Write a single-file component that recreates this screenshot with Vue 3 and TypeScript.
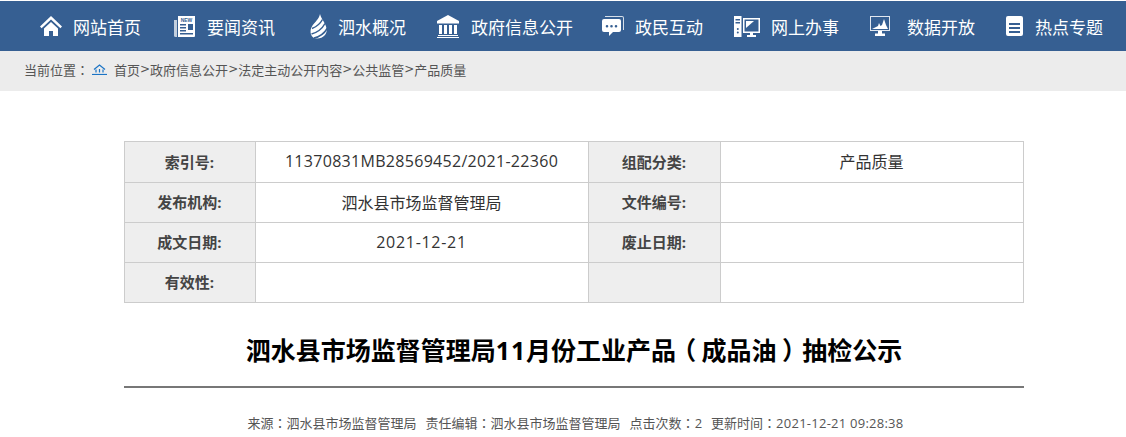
<script setup lang="ts">
interface NavItem { label: string; icon: string; width: number; column: number }
const nav: NavItem[] = [
  { label: '网站首页', icon: 'home', width: 33, column: 134 },
  { label: '要闻资讯', icon: 'news', width: 33, column: 134 },
  { label: '泗水概况', icon: 'drop', width: 30, column: 129 },
  { label: '政府信息公开', icon: 'bank', width: 34, column: 165 },
  { label: '政民互动', icon: 'chat', width: 33, column: 132 },
  { label: '网上办事', icon: 'pc', width: 37, column: 136 },
  { label: '数据开放', icon: 'chart', width: 37, column: 136 },
  { label: '热点专题', icon: 'list', width: 29, column: 120 },
]
const crumbs = ['首页', '政府信息公开', '法定主动公开内容', '公共监管', '产品质量']
const rows = [
  { k: 'a', c: ['索引号:', '11370831MB28569452/2021-22360', '组配分类:', '产品质量'], cls: 'code' },
  { k: 'b', c: ['发布机构:', '泗水县市场监督管理局', '文件编号:', ''], cls: '' },
  { k: 'c', c: ['成文日期:', '2021-12-21', '废止日期:', ''], cls: 'date' },
  { k: 'd', c: ['有效性:', '', '', ''], cls: '' },
]
</script>

<template>
  <div class="page">
    <nav class="nav">
      <a v-for="n in nav" :key="n.label" class="nav-item" :style="{ width: n.column + 'px' }">
        <span class="nav-icon" :style="{ width: n.width + 'px' }">
          <svg v-if="n.icon === 'home'" width="22" height="22" viewBox="0 0 22 22" fill="#fff"><path d="M11 1 0 11.500l1.600 1.700L11 4.400l9.400 8.800 1.600-1.700z"/><path d="M4 13.500 11 7l7 6.500V21h-5v-5H9v5H4z"/></svg>
          <svg v-else-if="n.icon === 'news'" width="21" height="21" viewBox="0 0 21 21" fill="#fff"><path d="M0 4h3v17H1.500A1.500 1.500 0 0 1 0 19.500z" opacity=".7"/><path fill-rule="evenodd" d="M4 0h17v20a1 1 0 0 1-1 1H4zM6 8v1.500h6V8zm8 0v6h5V8zM6 11v1.500h6V11zm0 3v1.500h6V14zm0 3v1.500h13V17z"/><text x="12.500" y="6" class="new">NEW</text></svg>
          <svg v-else-if="n.icon === 'drop'" class="drop" width="18" height="25" viewBox="0 0 18 25"><path fill="#fff" d="M10 0c1 4 3 6 5 10 2 4 2.500 8 0 11-2 2.500-5 3.500-8 3.500-3 0-5-1.500-6-4-1-3-.5-6 1.500-9C5 8 9 5 10 0z"/><path fill="none" stroke="#365f92" stroke-width="1.500" d="M2 14.500C6 13 10 10 12.500 5.500M1.500 20C7 18.500 12 15 15 9.500M4 24c5-1 10-4 13.500-10"/></svg>
          <svg v-else-if="n.icon === 'bank'" width="22" height="23" viewBox="0 0 22 23" fill="#fff"><path d="M11 0 0 6v2.500h22V6z"/><path d="M2 10h3v9H2zm5 0h3v9H7zm5 0h3v9h-3zm5 0h3v9h-3zM1 20h20v1H1zM0 22h22v1.500H0z"/></svg>
          <svg v-else-if="n.icon === 'chat'" width="22" height="21" viewBox="0 0 22 21" fill="#fff"><path d="M3 0h17a2 2 0 0 1 2 2v12h-1V2a1 1 0 0 0-1-1H3z" opacity=".8"/><path fill-rule="evenodd" d="M2 3h15a2 2 0 0 1 2 2v9a2 2 0 0 1-2 2h-6l-4 4v-4H2a2 2 0 0 1-2-2V5a2 2 0 0 1 2-2zm3 6a1.300 1.300 0 1 0 0 2.600A1.300 1.300 0 0 0 5 9zm4.500 0a1.300 1.300 0 1 0 0 2.600 1.300 1.300 0 0 0 0-2.600zM14 9a1.300 1.300 0 1 0 0 2.600A1.300 1.300 0 0 0 14 9z"/></svg>
          <svg v-else-if="n.icon === 'pc'" width="26" height="21" viewBox="0 0 26 21" fill="#fff"><path fill-rule="evenodd" d="M0 0h7.500v21H0zm1.500 3v1.500h4.500V3zm0 3v1.500h4.500V6zm2.300 6a1 1 0 1 0 0 2 1 1 0 0 0 0-2zm0 3.500a1 1 0 1 0 0 2 1 1 0 0 0 0-2z"/><path fill-rule="evenodd" d="M9 2h17v15h-7v2h3v2H13v-2h3v-2H9zm1.500 1.500v12h14v-12z"/><path d="M12 5h8l-8 7z"/></svg>
          <svg v-else-if="n.icon === 'chart'" width="20" height="20" viewBox="0 0 20 20" fill="#fff"><path fill-rule="evenodd" opacity=".85" d="M0 0h20v15H0zm1 1v13h18V1z"/><path d="M2 13l3-1.500L8 10l1-3 1.500 3L12 9l2-6 2 6 2 4z"/><path d="M8 15h4v2.500h3V20H5v-2.500h3z"/></svg>
          <svg v-else width="17" height="20" viewBox="0 0 17 20" fill="#fff"><path fill-rule="evenodd" d="M2 0h13a2 2 0 0 1 2 2v16a2 2 0 0 1-2 2H2a2 2 0 0 1-2-2V2a2 2 0 0 1 2-2zm1 7v2h11V7zm0 4v2h11v-2zm0 4v2h11v-2z"/></svg>
        </span>
        <span>{{ n.label }}</span>
      </a>
    </nav>

    <div class="crumb">
      <span>当前位置<span class="colon">：</span></span>
      <svg class="crumb-icon" width="15" height="11" viewBox="0 0 15 11" fill="none" stroke="#1b74c5" stroke-width="1.200"><path d="M2 5.500 7.500 1 13 5.500"/><path d="M4 5.500v3M7.500 5v3.500M11 5.500v3"/><path d="M0 10.500h15"/></svg>
      <template v-for="(c, i) in crumbs" :key="c">
        <span v-if="i" class="sep">&gt;</span><span>{{ c }}</span>
      </template>
    </div>

    <main class="main">
      <table class="info">
        <tbody>
          <tr v-for="r in rows" :key="r.k">
            <th>{{ r.c[0] }}</th>
            <td :class="r.cls">{{ r.c[1] }}</td>
            <th>{{ r.c[2] }}</th>
            <td>{{ r.c[3] }}</td>
          </tr>
        </tbody>
      </table>
      <h1 class="title">泗水县市场监督管理局<span class="latin">11</span>月份工业产品<span class="paren">（</span>成品油<span class="paren">）</span>抽检公示</h1>
      <p class="meta">
        <span>来源<span class="colon">：</span>泗水县市场监督管理局</span>
        <span>责任编辑<span class="colon">：</span>泗水县市场监督管理局</span>
        <span>点击次数<span class="colon">：</span>2</span>
        <span>更新时间<span class="colon">：</span><span class="time">2021-12-21 09:28:38</span></span>
      </p>
    </main>
  </div>
</template>

<style>
html, body { margin: 0; background: #fff; overflow: hidden; }
</style>

<style scoped>
.page {
  width: 1126px;
  height: 437px;
  overflow: hidden;
  padding-top: 1px;
  box-sizing: border-box;
  font-family: "Open Sans", "Noto Sans CJK SC", sans-serif;
  color: #333;
}
.nav {
  height: 50px;
  background: #365f92;
  display: flex;
  align-items: center;
  padding-left: 40px;
  color: #fff;
  font-size: 17px;
}
.nav-item { display: flex; align-items: center; flex: none; }
.nav-icon { display: flex; align-items: center; flex: none; }
.drop { margin-left: 2px; }
.new { font: 700 5px "Liberation Sans", sans-serif; fill: #365f92; text-anchor: middle; }
.crumb {
  height: 40px;
  background: #ececec;
  display: flex;
  align-items: center;
  padding: 0 0 4px 24px;
  box-sizing: border-box;
  font-size: 13px;
  color: #555;
}
.colon { font-family: "Noto Sans CJK TC", sans-serif; }
.sep { font-family: "DejaVu Sans", sans-serif; font-size: 12px; }
.crumb-icon { margin: 0 7px 0 3px; }
.main { width: 900px; margin: 50px 0 0 124px; }
.info {
  width: 900px;
  border-collapse: collapse;
  table-layout: fixed;
  font-size: 16px;
}
.info th, .info td {
  border: 1px solid #ccc;
  height: 37px;
  padding: 0 1px 2px 0;
  text-align: center;
}
.info tr:first-child > * { height: 38px; }
.info th {
  background: #eee;
  font-size: 15px;
  font-weight: 700;
  color: #444;
}
.info .code { letter-spacing: .3px; }
.info .date { letter-spacing: .7px; }
.info tr > :nth-child(1) { width: 129px; }
.info tr > :nth-child(2) { width: 331px; }
.info tr > :nth-child(3) { width: 130px; }
.title {
  margin: 0;
  height: 85px;
  box-sizing: border-box;
  padding-top: 27px;
  border-bottom: 2px solid #777;
  text-align: center;
  font-size: 25px;
  line-height: 40px;
  font-weight: 700;
  color: #000;
}
.title .latin { letter-spacing: .8px; }
.title .paren { font-feature-settings: "palt"; margin: 0 6.500px; }
.meta {
  margin: 25px 0 0;
  padding-left: 3px;
  display: flex;
  justify-content: center;
  gap: 9px;
  font-size: 13px;
  line-height: 20px;
  color: #555;
}
.meta .time { letter-spacing: .25px; }
</style>
